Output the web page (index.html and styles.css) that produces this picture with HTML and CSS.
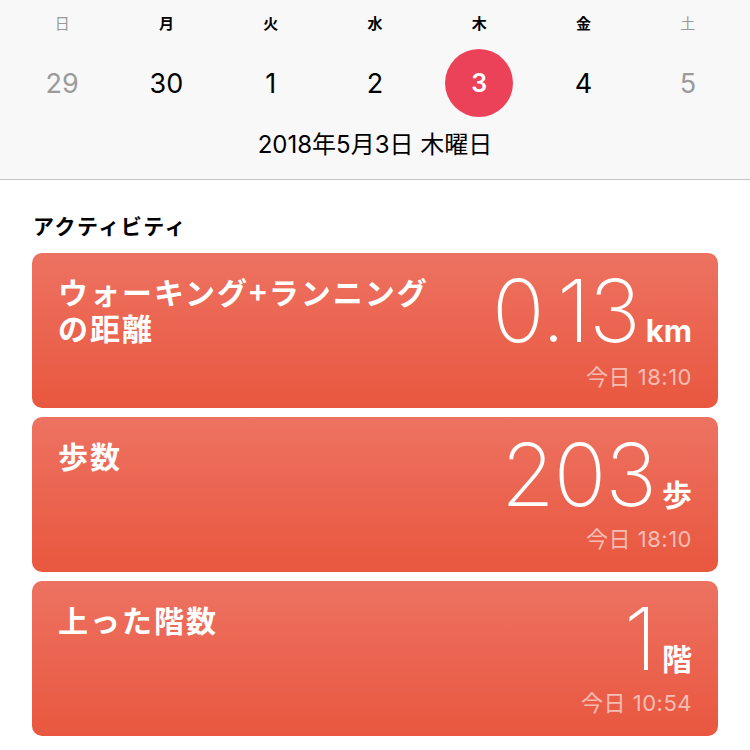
FILE: index.html
```html
<!DOCTYPE html>
<html lang="ja">
<head>
<meta charset="utf-8">
<link rel="stylesheet" href="styles.css">
</head>
<body>
<header class="cal">
  <div class="week">
    <span class="wd off">日</span>
    <span class="wd">月</span>
    <span class="wd">火</span>
    <span class="wd">水</span>
    <span class="wd">木</span>
    <span class="wd">金</span>
    <span class="wd off">土</span>
  </div>
  <div class="days">
    <span class="day off">29</span>
    <span class="day">30</span>
    <span class="day">1</span>
    <span class="day">2</span>
    <span class="day"><span class="sel">3</span></span>
    <span class="day">4</span>
    <span class="day off">5</span>
  </div>
  <div class="date">2018年5月3日 木曜日</div>
</header>
<main class="content">
  <h2 class="section">アクティビティ</h2>
  <div class="card">
    <div class="title"><span class="line">ウォーキング+ランニング</span><span class="line">の距離</span></div>
    <div class="data">
      <div class="value"><span class="num">0.13</span><span class="unit km">km</span></div>
      <div class="time">今日 18:10</div>
    </div>
  </div>
  <div class="card">
    <div class="title"><span class="line">歩数</span></div>
    <div class="data">
      <div class="value"><span class="num">203</span><span class="unit">歩</span></div>
      <div class="time">今日 18:10</div>
    </div>
  </div>
  <div class="card">
    <div class="title"><span class="line">上った階数</span></div>
    <div class="data">
      <div class="value"><span class="num">1</span><span class="unit">階</span></div>
      <div class="time">今日 10:54</div>
    </div>
  </div>
</main>
</body>
</html>
```

FILE: styles.css
```css
html, body {
  margin: 0;
  padding: 0;
  background: #ffffff;
}
body {
  width: 750px;
  height: 750px;
  overflow: hidden;
  font-family: "Liberation Sans", "Noto Sans CJK JP", sans-serif;
  color: #000;
}
.cal {
  background: #f8f8f8;
  height: 180px;
  border-bottom: 1px solid #c4c4c4;
  box-sizing: border-box;
  padding: 0 10px;
}
.week, .days {
  display: grid;
  grid-template-columns: repeat(7, 1fr);
  text-align: center;
}
.week {
  height: 44px;
  align-items: center;
}
.wd {
  font-family: "Noto Sans CJK JP", sans-serif;
  font-size: 15px;
  font-weight: 700;
  color: #000;
}
.wd.off {
  font-weight: 400;
  color: #9a9a9a;
}
.days {
  height: 68px;
  margin-top: 5px;
  align-items: center;
}
.day {
  font-family: "Inter", "Liberation Sans", sans-serif;
  font-size: 27px;
  color: #000;
  display: flex;
  justify-content: center;
  align-items: center;
}
.day.off {
  color: #9b9b9b;
}
.sel {
  width: 68px;
  height: 68px;
  border-radius: 50%;
  background: #ec4259;
  color: #fff;
  font-weight: 600;
  font-size: 25px;
  display: flex;
  justify-content: center;
  align-items: center;
}
.date {
  margin-top: 13px;
  text-align: center;
  font-family: "Inter", "Noto Sans CJK JP", sans-serif;
  font-size: 24px;
  line-height: 30px;
}
.content {
  padding: 0 32px;
}
.section {
  margin: 31px 0 14px 1px;
  font-family: "Noto Sans CJK JP", sans-serif;
  font-size: 21px;
  letter-spacing: 1.5px;
  line-height: 28px;
  font-weight: 700;
}
.card {
  height: 155px;
  margin-bottom: 9px;
  border-radius: 10px;
  background: linear-gradient(#ed7261, #e9573f);
  color: #fff;
  display: flex;
  justify-content: space-between;
  box-sizing: border-box;
  padding: 20px 26px 0 26px;
}
.title {
  display: flex;
  flex-direction: column;
  font-family: "Noto Sans CJK JP", sans-serif;
  font-weight: 700;
  font-size: 30px;
  letter-spacing: 2px;
}
.line {
  display: block;
  height: 36px;
  line-height: 36px;
  overflow: visible;
}
.data {
  display: flex;
  flex-direction: column;
  align-items: flex-end;
}
.value {
  display: flex;
  align-items: baseline;
  line-height: 80px;
  margin-top: -2px;
}
.num {
  font-family: "Inter", "Liberation Sans", sans-serif;
  font-weight: 200;
  font-size: 87px;
  letter-spacing: -1px;
}
.unit {
  font-family: "Noto Sans CJK JP", sans-serif;
  font-weight: 700;
  font-size: 30px;
  margin-left: 6px;
}
.unit.km {
  font-family: "Inter", "Liberation Sans", sans-serif;
  font-size: 31px;
}
.time {
  margin-top: -6px;
  font-family: "Inter", "Noto Sans CJK JP", sans-serif;
  font-size: 22px;
  letter-spacing: 0.5px;
  line-height: 24px;
  color: rgba(255, 255, 255, 0.6);
}
```
